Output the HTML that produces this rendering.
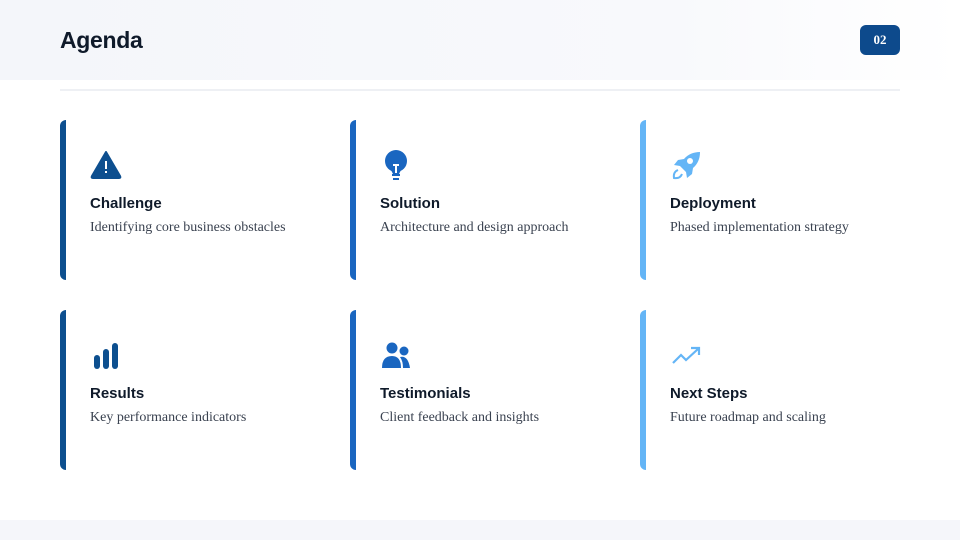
<!DOCTYPE html>
<html><head><meta charset="utf-8"><style>
*{margin:0;padding:0;box-sizing:border-box}
body{width:960px;height:540px;background:#fff;position:relative;overflow:hidden;font-family:"Liberation Sans",sans-serif}
.hdr{position:absolute;left:0;top:0;width:960px;height:80px;background:linear-gradient(90deg,#f4f6fa,#f8f9fc 70%,#fff)}
h1{position:absolute;left:60px;top:27px;font-size:23px;font-weight:bold;color:#0f1a2a;letter-spacing:-0.3px}
.badge{position:absolute;left:860px;top:25px;width:40px;height:30px;border-radius:6px;background:#0d4a8c;color:#fff;font-family:"Liberation Serif",serif;font-weight:bold;font-size:13px;text-align:center;line-height:30px}
.line{position:absolute;left:60px;top:89px;width:840px;height:2px;background:#eef0f4}
.foot{position:absolute;left:0;top:520px;width:960px;height:20px;background:#f5f6fa}
.card{position:absolute;width:280px;height:160px;border-left:6px solid;border-radius:6px 0 0 6px;background:#fff}
.card svg{position:absolute;left:24px;top:30px}
.t{position:absolute;left:24px;top:75px;font-size:15px;font-weight:bold;color:#0f1a2a}
.d{position:absolute;left:24px;top:100px;font-family:"Liberation Serif",serif;font-size:14px;color:#3a4250}
.c1{border-color:#0d4f8f}.c2{border-color:#1a66c0}.c3{border-color:#64b5f6}
</style></head><body>
<div class="hdr"></div>
<h1>Agenda</h1>
<div class="badge">02</div>
<div class="line"></div>
<div class="foot"></div>

<div class="card c1" style="left:60px;top:120px">
<svg width="32" height="30" viewBox="0 0 32 30"><path d="M16 2 L30 26 Q31 28 29 28 H3 Q1 28 2 26 Z" fill="#0d4f8f" stroke="#0d4f8f" stroke-width="2" stroke-linejoin="round"/><rect x="15" y="11" width="2" height="8" fill="#fff"/><rect x="15" y="21" width="2" height="2" fill="#fff"/></svg>
<div class="t">Challenge</div><div class="d">Identifying core business obstacles</div></div>

<div class="card c2" style="left:350px;top:120px">
<svg width="32" height="32" viewBox="0 0 32 32"><circle cx="16" cy="11" r="11" fill="#1a66c0"/><path d="M10 18 L13 24 H19 L22 18Z" fill="#1a66c0"/><rect x="12" y="24" width="8" height="2" fill="#1a66c0"/><rect x="13" y="28" width="6" height="2" fill="#1a66c0"/><path d="M13 15 H19 M16 15 V23" stroke="#fff" stroke-width="2"/></svg>
<div class="t">Solution</div><div class="d">Architecture and design approach</div></div>

<div class="card c3" style="left:640px;top:120px">
<svg width="32" height="32" viewBox="0 0 32 32"><path d="M30 2 Q20 2 14 9 L8 10 L4 15 L10 16 L16 22 L17 28 L22 24 L23 18 Q30 12 30 2Z" fill="#64b5f6"/><circle cx="20" cy="11" r="3" fill="#fff"/><path d="M8 20 Q3 22 4 28 Q10 29 12 24" fill="none" stroke="#64b5f6" stroke-width="2"/></svg>
<div class="t">Deployment</div><div class="d">Phased implementation strategy</div></div>

<div class="card c1" style="left:60px;top:310px">
<svg width="32" height="32" viewBox="0 0 32 32"><rect x="4" y="15" width="6" height="14" rx="3" fill="#0d4f8f"/><rect x="13" y="9" width="6" height="20" rx="3" fill="#0d4f8f"/><rect x="22" y="3" width="6" height="26" rx="3" fill="#0d4f8f"/></svg>
<div class="t">Results</div><div class="d">Key performance indicators</div></div>

<div class="card c2" style="left:350px;top:310px">
<svg width="32" height="32" viewBox="0 0 32 32"><circle cx="12" cy="8" r="5.5" fill="#1a66c0"/><circle cx="24" cy="11" r="4.5" fill="#1a66c0"/><path d="M2 28 Q2 16 12 16 Q21 16 21 28Z" fill="#1a66c0"/><path d="M20 17 Q28 15 30 28 H23 Q23 21 20 17Z" fill="#1a66c0"/></svg>
<div class="t">Testimonials</div><div class="d">Client feedback and insights</div></div>

<div class="card c3" style="left:640px;top:310px">
<svg width="32" height="32" viewBox="0 0 32 32"><path d="M3 23 L11 15 L16 20 L28 9 M21 8 H29 V15" fill="none" stroke="#64b5f6" stroke-width="2.2"/></svg>
<div class="t">Next Steps</div><div class="d">Future roadmap and scaling</div></div>
</body></html>
